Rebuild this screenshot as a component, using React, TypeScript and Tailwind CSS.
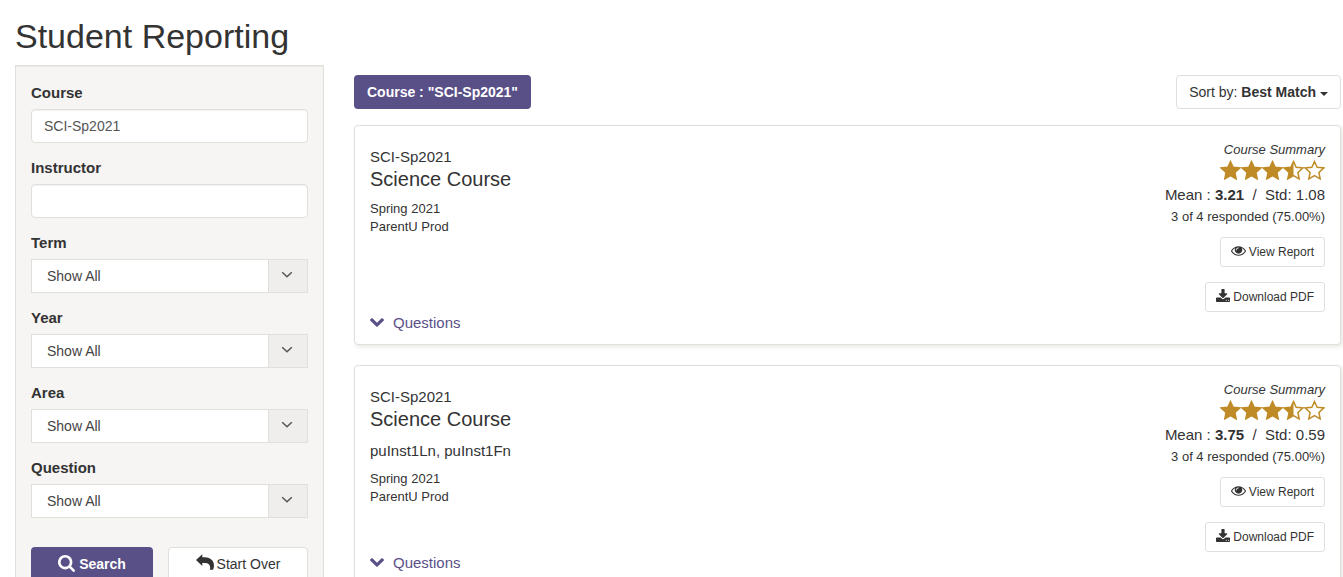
import React, { useId } from "react";

const EYE =
  "M1664 960q-152-236-381-353 61 104 61 225 0 185-131.5 316.5t-316.5 131.5-316.5-131.5-131.5-316.5q0-121 61-225-229 117-381 353 133 205 333.5 326.5t434.5 121.5 434.5-121.5 333.5-326.5zm-720-384q0-20-14-34t-34-14q-125 0-214.5 89.5t-89.5 214.5q0 20 14 34t34 14 34-14 14-34q0-86 61-147t147-61q20 0 34-14t14-34zm848 384q0 34-20 69-140 230-376.5 368.5t-499.5 138.5-499.5-139-376.5-368q-20-35-20-69t20-69q140-229 376.5-368t499.5-139 499.5 139 376.5 368q20 35 20 69z";
const DOWNLOAD =
  "M1344 1344q0-26-19-45t-45-19-45 19-19 45 19 45 45 19 45-19 19-45zm256 0q0-26-19-45t-45-19-45 19-19 45 19 45 45 19 45-19 19-45zm128-224v320q0 40-28 68t-68 28h-1472q-40 0-68-28t-28-68v-320q0-40 28-68t68-28h465l135 136q58 56 136 56t136-56l136-136h464q40 0 68 28t28 68zm-325-569q17 41-14 70l-448 448q-18 19-45 19t-45-19l-448-448q-31-29-14-70 17-39 59-39h256v-448q0-26 19-45t45-19h256q26 0 45 19t19 45v448h256q42 0 59 39z";
const SEARCH =
  "M1216 832q0-185-131.5-316.5t-316.5-131.5-316.5 131.5-131.5 316.5 131.5 316.5 316.5 131.5 316.5-131.5 131.5-316.5zm512 832q0 52-38 90t-90 38q-54 0-90-38l-343-342q-179 124-399 124-143 0-273.5-55.5t-225-150-150-225-55.5-273.5 55.5-273.5 150-225 225-150 273.5-55.5 273.5 55.5 225 150 150 225 55.5 273.5q0 220-124 399l343 343q37 37 37 90z";
const CHEVRON =
  "M1683 808l-742 741q-19 19-45 19t-45-19l-742-741q-19-19-19-45.5t19-45.5l166-165q19-19 45-19t45 19l531 531 531-531q19-19 45-19t45 19l166 165q19 19 19 45.5t-19 45.5z";

type IconProps = { d: string; className: string; viewBox?: string };

function Icon({ d, className, viewBox = "0 0 1792 1792" }: IconProps) {
  return (
    <svg aria-hidden="true" viewBox={viewBox} fill="currentColor" className={`shrink-0 ${className}`}>
      <path d={d} />
    </svg>
  );
}

function Star({ kind }: { kind: "full" | "half" | "empty" }) {
  const outline = "M10.5 1.600L13.200 7.300L19.800 8L14.900 12.500L16.200 18.900L10.500 15.700L4.800 18.900L6.100 12.500L1.200 8L7.800 7.300Z";
  return (
    <svg aria-hidden="true" viewBox="0 0 21 20" stroke="currentColor" strokeWidth="1.5" className="h-5 w-[21px]">
      <path d={outline} fill={kind === "full" ? "currentColor" : "none"} />
      {kind === "half" && (
        <path d="M10.500 1.600V15.700L4.800 18.900L6.100 12.500L1.200 8L7.800 7.300Z" fill="currentColor" stroke="none" />
      )}
    </svg>
  );
}

function TextField({ label, value }: { label: string; value?: string }) {
  const id = useId();
  return (
    <div className="mb-[14px]">
      <label htmlFor={id} className="mb-1.5 block text-[15px] leading-[21px] font-bold">
        {label}
      </label>
      <input
        id={id}
        type="text"
        defaultValue={value}
        className="block h-[34px] w-full rounded border border-[#e0dfda] bg-white px-3 text-sm text-[#555] shadow-[inset_0_1px_1px_rgba(0,0,0,0.06)]"
      />
    </div>
  );
}

function SelectField({ label }: { label: string }) {
  const id = useId();
  return (
    <div className="mb-[14px]">
      <label htmlFor={id} className="mb-1.5 block text-[15px] leading-[21px] font-bold">
        {label}
      </label>
      <div className="grid h-[34px] grid-cols-[1fr_39px] border border-[#e0dfda] bg-white">
        <select
          id={id}
          className="col-span-2 col-start-1 row-start-1 h-8 w-full appearance-none pl-[15px] text-sm text-[#444]"
        >
          <option>Show All</option>
        </select>
        <span className="pointer-events-none col-start-2 row-start-1 flex h-8 items-center justify-center border-l border-[#e0dfda] bg-[#efeeed] pr-0.5 pb-0.5 text-[#555]">
          <svg aria-hidden="true" viewBox="0 0 12 8" fill="none" stroke="currentColor" strokeWidth="1.5" className="h-2 w-3">
            <path d="M1.2 1.3L6 5.8l4.8-4.5" />
          </svg>
        </span>
      </div>
    </div>
  );
}

type Course = { mean: string; std: string; instructor?: string };

function CourseCard({ mean, std, instructor }: Course) {
  return (
    <article className="flex min-h-[220px] justify-between rounded border border-[#e0dfda] bg-white px-[15px] shadow-[2px_2px_4px_rgba(60,55,30,0.12)]">
      <div className="flex flex-col pt-5 pb-[11px]">
        <p className="text-[15px] leading-[21px]">SCI-Sp2021</p>
        <h2 className="mb-[9px] text-xl leading-6">Science Course</h2>
        {instructor && <p className="mb-[9px] text-[15px] leading-[21px]">{instructor}</p>}
        <p className="text-[13px] leading-[18px]">Spring 2021</p>
        <p className="text-[13px] leading-[18px]">ParentU Prod</p>
        <a href="#questions" className="mt-auto flex items-center text-[15px] leading-[21px] text-[#5a5088]">
          <Icon d={CHEVRON} viewBox="90 533 1612 1035" className="mr-[9px] h-[9px] w-[14px]" />
          Questions
        </a>
      </div>
      <div className="flex flex-col items-end pt-[14px]">
        <p className="text-[13px] leading-5 italic">Course Summary</p>
        <div role="img" aria-label="3.5 of 5 stars" className="flex text-[#bf8b26]">
          <Star kind="full" />
          <Star kind="full" />
          <Star kind="full" />
          <Star kind="half" />
          <Star kind="empty" />
        </div>
        <p className="mt-1 text-[15px] leading-[21px] whitespace-pre">
          Mean : <b>{mean}</b>{"  /  Std: "}{std}
        </p>
        <p className="mb-2 text-[13px] leading-6">3 of 4 responded (75.00%)</p>
        <button type="button" className="mb-[15px] flex h-[30px] items-center rounded-[3px] border border-[#e0dfda] bg-white px-[10px] text-xs">
          <Icon d={EYE} className="mr-[3px] mb-[3px] size-[15px]" />
          View Report
        </button>
        <button type="button" className="flex h-[30px] items-center rounded-[3px] border border-[#e0dfda] bg-white px-[10px] text-xs">
          <Icon d={DOWNLOAD} viewBox="64 0 1664 1664" className="mr-[3px] mb-[3px] size-[14px]" />
          Download PDF
        </button>
      </div>
    </article>
  );
}

export default function App() {
  return (
    <main className="bg-white pr-0.5 pl-[15px] font-['Liberation_Sans',Arial,sans-serif] text-[#333]">
      <h1 className="pt-4 pb-[9px] text-[34px] leading-10">Student Reporting</h1>
      <div className="flex items-start gap-[30px]">
        <form
          className="w-[309px] shrink-0 border border-[#e0dfda] bg-[#f6f5f3] px-[15px] py-4 shadow-[inset_0_1px_1px_rgba(0,0,0,0.05)]"
          onSubmit={(e) => e.preventDefault()}
        >
          <TextField label="Course" value="SCI-Sp2021" />
          <TextField label="Instructor" />
          <SelectField label="Term" />
          <SelectField label="Year" />
          <SelectField label="Area" />
          <SelectField label="Question" />
          <div className="mt-[29px] flex gap-[15px]">
            <button type="submit" className="flex h-[34px] w-[122px] items-center justify-center gap-1 rounded bg-[#5a5088] text-sm font-bold text-white">
              <Icon d={SEARCH} viewBox="64 128 1664 1664" className="mb-0.5 size-[17px]" />
              Search
            </button>
            <button type="reset" className="flex h-[34px] flex-1 items-center justify-center gap-[3px] rounded border border-[#e0dfda] bg-white text-sm">
              <svg aria-hidden="true" viewBox="0 0 18 16" fill="currentColor" className="mb-1 h-4 w-[18px]">
                <path d="M0 6L6.300 0.200v3h2.700c5.600 0 9 3.600 9 8.300 0 1.500-.3 2.900-1 4.300h-3.200c.3-.8.400-1.500.4-2.200 0-2.800-1.800-4.600-5.200-4.600h-2.700v2.900z" />
              </svg>
              Start Over
            </button>
          </div>
        </form>
        <section className="flex min-w-0 flex-1 flex-col gap-5 pt-[10px] pb-5">
          <div className="-mb-1 flex items-start justify-between">
            <button type="button" className="h-[34px] rounded bg-[#5a5088] px-[13px] text-sm font-bold text-white">
              Course : "SCI-Sp2021"
            </button>
            <button type="button" className="flex h-[34px] items-center rounded border border-[#e0dfda] bg-white px-3 text-sm">
              <span>
                Sort by: <b>Best Match</b>
              </span>
              <span className="mt-1 ml-1 border-x-4 border-t-4 border-x-transparent border-t-[#333]" />
            </button>
          </div>
          <CourseCard mean="3.21" std="1.08" />
          <CourseCard mean="3.75" std="0.59" instructor="puInst1Ln, puInst1Fn" />
        </section>
      </div>
    </main>
  );
}
